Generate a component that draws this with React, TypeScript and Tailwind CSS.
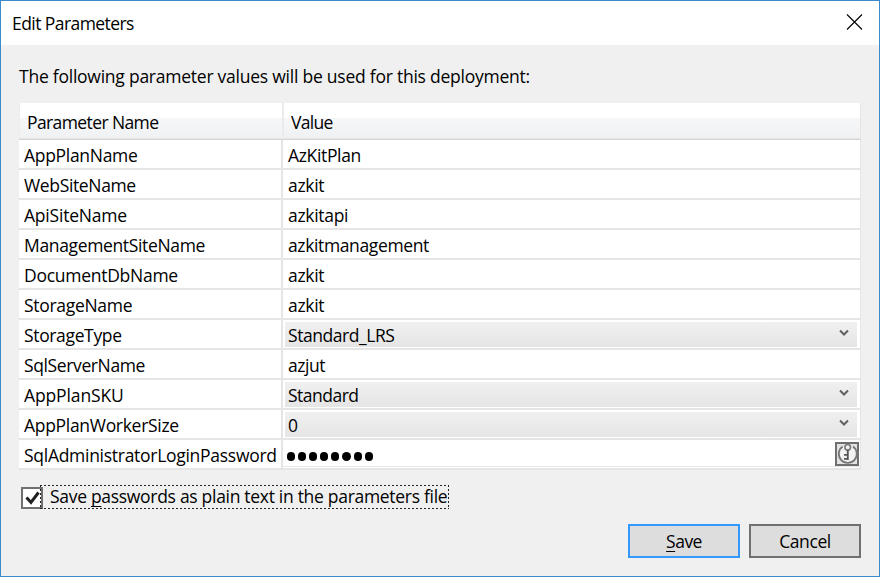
import type { ReactNode } from "react";

type Row = { name: string; value: string; kind?: "select" | "password"; nameCls: string; valueCls: string };

const rows: Row[] = [
  { name: "AppPlanName", value: "AzKitPlan", nameCls: "tracking-[-0.3px]", valueCls: "tracking-[-0.35px]" },
  { name: "WebSiteName", value: "azkit", nameCls: "tracking-[-0.35px]", valueCls: "tracking-[-0.3px]" },
  { name: "ApiSiteName", value: "azkitapi", nameCls: "tracking-[-0.2px]", valueCls: "tracking-[-0.3px]" },
  { name: "ManagementSiteName", value: "azkitmanagement", nameCls: "tracking-[-0.35px]", valueCls: "tracking-[-0.37px]" },
  { name: "DocumentDbName", value: "azkit", nameCls: "tracking-[-0.27px]", valueCls: "tracking-[-0.3px]" },
  { name: "StorageName", value: "azkit", nameCls: "tracking-[-0.3px]", valueCls: "tracking-[-0.3px]" },
  { name: "StorageType", value: "Standard_LRS", kind: "select", nameCls: "tracking-[-0.35px]", valueCls: "tracking-[-0.45px]" },
  { name: "SqlServerName", value: "azjut", nameCls: "tracking-[-0.38px]", valueCls: "tracking-[-0.45px]" },
  { name: "AppPlanSKU", value: "Standard", kind: "select", nameCls: "tracking-[-0.12px]", valueCls: "tracking-[-0.5px]" },
  { name: "AppPlanWorkerSize", value: "0", kind: "select", nameCls: "tracking-[-0.3px]", valueCls: "tracking-[-0.3px]" },
  { name: "SqlAdministratorLoginPassword", value: "", kind: "password", nameCls: "tracking-[-0.28px]", valueCls: "" },
];

function KeyIcon() {
  return (
    <svg width="24" height="24" viewBox="0 0 24 24" fill="none" className="mt-[1px]">
      <rect x="1" y="1" width="22" height="22" fill="#e4e4e4" stroke="#707070" strokeWidth="2" />
      <path d="M7.6 4.6A9 9 0 1 0 18 4.6" fill="#f2f2f2" stroke="#777" strokeWidth="1.8" />
      <circle cx="12.7" cy="5.3" r="2.8" fill="#f2f2f2" stroke="#777" strokeWidth="1.6" />
      <path d="M12.8 8v10M9 12.8h4M9 16.8h4" stroke="#555" strokeWidth="1.8" />
    </svg>
  );
}

function Value({ row }: { row: Row }): ReactNode {
  if (row.kind === "select") {
    return (
      <div className="mt-[2px] mr-[3px] ml-[2px] flex h-[25px] w-full items-center justify-between bg-linear-to-b from-[#f0f0f0] to-[#e5e5e5] pr-2 pl-[3px]">
        <span className={"pt-[2px] " + row.valueCls}>{row.value}</span>
        <svg width="10" height="8" viewBox="0 0 10 8" fill="none" className="-mt-[3px]">
          <path d="M1 1.5L5 5.5L9 1.5" stroke="#606060" strokeWidth="2" />
        </svg>
      </div>
    );
  }
  if (row.kind === "password") {
    return (
      <div className="flex h-[27px] w-full items-center justify-between border-b border-[#e6e6e6] pr-[1px] pl-1">
        <div className="flex gap-[3px]">
          {Array.from({ length: 8 }, (_, i) => (
            <span key={i} className="mt-[7px] size-[8.1px] rounded-full bg-black" />
          ))}
        </div>
        <KeyIcon />
      </div>
    );
  }
  return <span className={"mt-px pl-[5px] leading-[28px] " + row.valueCls}>{row.value}</span>;
}

export default function App() {
  return (
    <div className="flex h-[577px] w-[880px] flex-col border border-[#3b8bd0] bg-[#f0f0f0] font-['Open_Sans','Noto_Sans',sans-serif] text-[17.5px] whitespace-nowrap text-black">
      <header className="flex h-[44px] items-center justify-between bg-white pr-[16px] pl-[11px]">
        <span className="tracking-[-0.57px]">Edit Parameters</span>
        <svg width="17" height="17" viewBox="0 0 17 17" fill="none" className="-mt-px">
          <path d="M1 0.5L16 15.5M16 0.5L1 15.5" stroke="#000" strokeWidth="1.1" />
        </svg>
      </header>
      <main className="flex flex-1 flex-col pr-[18px] pl-[18px]">
        <p className="mt-[19px] h-[25px] leading-[24px] tracking-[-0.24px]">
          The following parameter values will be used for this deployment:
        </p>
        <div className="mt-[14px] flex w-[842px] flex-col">
          <div className="flex h-[37px] border-b border-[#d5d5d5] bg-[linear-gradient(#fff_0px,#fff_15px,#f5f7f8_15px,#eff1f3_35px,#d9dadb_36px)] leading-[38px]">
            <div className="w-[265px] border-r-2 border-l border-r-[#e9ebec] border-l-[#ececec] pl-[7px] tracking-[-0.6px]">Parameter Name</div>
            <div className="flex-1 border-r border-[#e6e6e6] pl-[7px] tracking-[-0.7px]">Value</div>
          </div>
          {rows.map((row) => (
            <div key={row.name} className="flex h-[30px] border-b-2 border-[#e5e5e5] bg-white">
              <div className={"w-[264px] border-r-2 border-[#e5e5e5] pt-px pl-[5px] leading-[28px] " + row.nameCls}>{row.name}</div>
              <div className="flex flex-1 border-r border-[#e6e6e6]">
                <Value row={row} />
              </div>
            </div>
          ))}
        </div>
        <div className="mt-[15px] ml-[2px] flex h-[24px] items-start">
          <svg width="22" height="22" viewBox="0 0 22 22" fill="none" className="mt-[2px]">
            <rect x="1" y="1" width="20" height="20" fill="#fff" stroke="#707070" strokeWidth="2" />
            <path d="M5.5 10.5L10 15.5L17.5 5.5" stroke="#212121" strokeWidth="3" />
          </svg>
          <div className="-ml-[3px] h-[24px] w-[409px] bg-[repeating-linear-gradient(90deg,#222_0_2px,transparent_2px_4px),repeating-linear-gradient(90deg,#222_0_2px,transparent_2px_4px),repeating-linear-gradient(#222_0_2px,transparent_2px_4px),repeating-linear-gradient(#222_0_2px,transparent_2px_4px)] bg-[length:100%_1px,100%_1px,1px_100%,1px_100%] bg-[position:0_0,0_100%,0_0,100%_0] bg-no-repeat pl-[10px] leading-[23px] tracking-[-0.3px]">
            Save <span className="underline decoration-1 underline-offset-[3px] [text-decoration-skip-ink:none]">p</span>asswords as plain text in the parameters file
          </div>
        </div>
        <div className="mt-[15px] flex justify-end gap-[9px]">
          <button className="h-[34px] w-[112px] border-2 border-[#3399ff] bg-[#dddddd] tracking-[-0.5px]">
            <span className="underline decoration-1 underline-offset-[3px]">S</span>ave
          </button>
          <button className="h-[34px] w-[112px] border-2 border-[#707070] bg-[#dddddd] tracking-[-0.4px]">Cancel</button>
        </div>
      </main>
    </div>
  );
}
